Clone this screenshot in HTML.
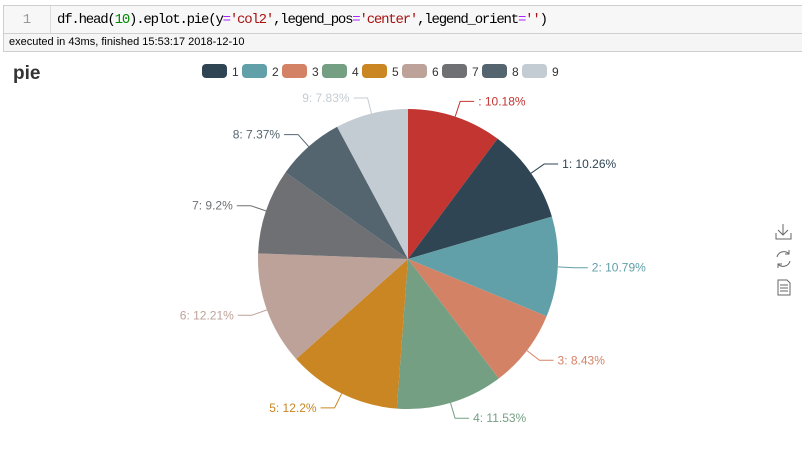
<!DOCTYPE html>
<html><head><meta charset="utf-8"><style>
body{margin:0;width:802px;height:470px;background:#fff;overflow:hidden;font-family:"Liberation Sans",sans-serif;position:relative}
.cell{position:absolute;left:3px;top:5px;width:820px;height:29px;border:1px solid #cfcfcf;background:#f7f7f7;box-sizing:border-box}
.gut{position:absolute;left:0;top:0;width:46px;height:27px;border-right:1px solid #ddd;color:#999;font:14px "Liberation Mono",monospace;text-align:center;line-height:29px}
.code{position:absolute;left:53px;top:0;font:14px "Liberation Mono",monospace;line-height:29px;color:#000;white-space:pre;letter-spacing:-1.2px}
.out{position:absolute;left:3px;top:34px;width:820px;height:18px;border:1px solid #cfcfcf;border-top:none;box-sizing:border-box;font-size:11px;line-height:17px;padding-left:5px;color:#000;background:#f5f5f5}
.t{position:absolute;left:13px;top:63px;font-size:19px;font-weight:bold;color:#333}
</style></head><body>
<div class="cell"><div class="gut">1</div><div class="code">df.head(<span style="color:#080">10</span>).eplot.pie(y<span style="color:#a2f">=</span><span style="color:#a11">'col2'</span>,legend_pos<span style="color:#a2f">=</span><span style="color:#a11">'center'</span>,legend_orient<span style="color:#a2f">=</span><span style="color:#a11">''</span>)</div></div>
<div class="out">executed in 43ms, finished 15:53:17 2018-12-10</div>
<div class="t">pie</div>
<svg id="s" width="802" height="470" style="position:absolute;left:0;top:0" font-family="Liberation Sans, sans-serif" font-size="12"></svg>
<script>
var v=[10.18,10.26,10.79,8.43,11.53,12.2,12.21,9.2,7.37,7.83];
var c=['#c23531','#2f4554','#61a0a8','#d48265','#749f83','#ca8622','#bda29a','#6e7074','#546570','#c4ccd3'];
var cx=408,cy=259,r=150,s='',a=0;
for(var i=0;i<10;i++){
 var a2=a+v[i]/100*2*Math.PI;
 var x1=cx+r*Math.sin(a),y1=cy-r*Math.cos(a),x2=cx+r*Math.sin(a2),y2=cy-r*Math.cos(a2);
 s+='<path d="M'+cx+' '+cy+'L'+x1+' '+y1+'A'+r+' '+r+' 0 '+((a2-a)>Math.PI?1:0)+' 1 '+x2+' '+y2+'Z" fill="'+c[i]+'"/>';
 var m=(a+a2)/2,sx=Math.sin(m),cy2=Math.cos(m);
 var px=cx+r*sx,py=cy-r*cy2,qx=cx+(r+16)*sx,qy=cy-(r+16)*cy2,d=sx>=0?1:-1,ex=qx+d*14;
 s+='<polyline points="'+px+','+py+' '+qx+','+qy+' '+ex+','+qy+'" fill="none" stroke="'+c[i]+'"/>';
 s+='<text x="'+(ex+d*4)+'" y="'+(qy+4)+'" fill="'+c[i]+'" text-anchor="'+(d>0?'start':'end')+'">'+(i==0?'':i)+': '+v[i]+'%</text>';
 a=a2;
}
for(var i=1;i<10;i++){var lx=202+(i-1)*40;s+='<rect x="'+(lx)+'" y="64" width="25" height="14" rx="4" fill="'+c[i]+'"/><text x="'+(lx+30)+'" y="76" fill="#333">'+i+'</text>';}
s+='<g fill="none" stroke="#666" stroke-width="1"><path d="M783 224v11M778 230l5 5 5-5M776 233v6h15v-6"/><path d="M777 257a7 7 0 0 1 12-3M790 261a7 7 0 0 1-12 3M789 250v4h-4M778 268v-4h4"/><path d="M778 280h9l3 3v12h-12zM780 285h8M780 288h8M780 291h8"/></g>';
document.getElementById('s').innerHTML=s;
</script>
</body></html>
